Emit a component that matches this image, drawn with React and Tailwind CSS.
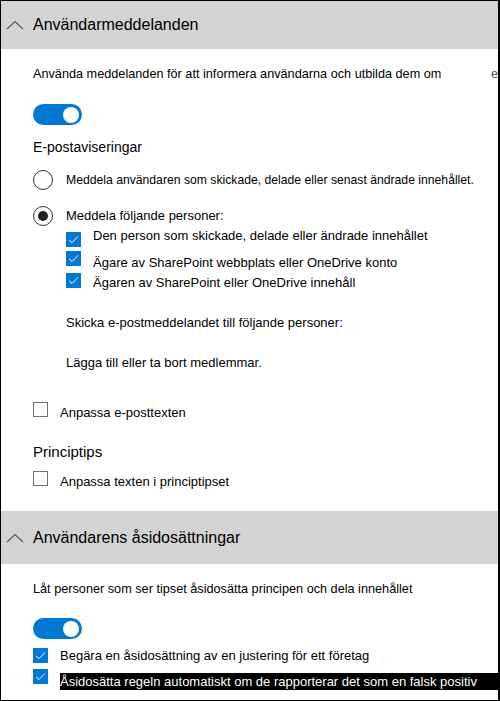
import React from "react";

const Chevron = () => (
  <svg width="18" height="10" viewBox="0 0 18 10" className="shrink-0">
    <polyline points="1,9 9,1.5 17,9" fill="none" stroke="#555" strokeWidth="1.1" />
  </svg>
);

const Toggle = () => (
  <div className="w-[49px] h-[21px] rounded-full bg-[#0078d4] flex items-center justify-end pr-[3px]">
    <div className="w-[16px] h-[16px] rounded-full bg-white" />
  </div>
);

const CheckBox = ({ checked, className = "" }) =>
  checked ? (
    <div className={`w-[15px] h-[15px] bg-[#0078d4] flex items-center justify-center shrink-0 ${className}`}>
      <svg width="11" height="9" viewBox="0 0 11 9">
        <polyline points="1,4.8 4,7.6 10,1.4" fill="none" stroke="white" strokeWidth="1" />
      </svg>
    </div>
  ) : (
    <div className={`w-[15px] h-[15px] border border-[#707070] bg-white shrink-0 ${className}`} />
  );

const Radio = ({ selected }) => (
  <div className="w-[20px] h-[20px] rounded-full border-[1.5px] border-[#333] flex items-center justify-center shrink-0">
    {selected && <div className="w-[10px] h-[10px] rounded-full bg-[#222]" />}
  </div>
);

const Header = ({ title, h }) => (
  <div className={`${h} bg-[#d3d3d3] flex items-center pl-[5px] gap-[9px]`}>
    <Chevron />
    <span className="text-[16px] text-black">{title}</span>
  </div>
);

export default function App() {
  return (
    <div
      className="w-[500px] h-[701px] border border-r-2 border-black bg-white overflow-hidden text-black"
      style={{ fontFamily: '"Liberation Sans", Arial, sans-serif' }}
    >
      <Header title="Användarmeddelanden" h="h-[48px]" />

      <div className="pl-[32px] text-[13px] leading-[20px] whitespace-nowrap">
        <div className="mt-[15px] relative text-[12.7px]">
          Använda meddelanden för att informera användarna och utbilda dem om
          <span className="absolute left-[458px] text-[#555]">e</span>
        </div>

        <div className="mt-[20px]">
          <Toggle />
        </div>

        <div className="mt-[12px] text-[14px]">E-postaviseringar</div>

        <div className="mt-[13px] flex items-center gap-[13px] h-[20px]">
          <Radio />
          <span className="text-[12.2px]">
            Meddela användaren som skickade, delade eller senast ändrade innehållet.
          </span>
        </div>

        <div className="mt-[16px] flex items-center gap-[13px] h-[20px]">
          <Radio selected />
          <span>Meddela följande personer:</span>
        </div>

        <div className="pl-[33px] flex flex-col">
          <div className="flex items-start gap-[12px]">
            <CheckBox checked className="mt-[6px]" />
            <span>Den person som skickade, delade eller ändrade innehållet</span>
          </div>
          <div className="mt-[4px] flex items-start gap-[12px]">
            <CheckBox checked />
            <span className="mt-[2px]">Ägare av SharePoint webbplats eller OneDrive konto</span>
          </div>
          <div className="flex items-start gap-[12px]">
            <CheckBox checked />
            <span>Ägaren av SharePoint eller OneDrive innehåll</span>
          </div>

          <div className="mt-[20px]">Skicka e-postmeddelandet till följande personer:</div>
          <div className="mt-[20px]">Lägga till eller ta bort medlemmar.</div>
        </div>

        <div className="mt-[29px] flex items-start gap-[12px]">
          <CheckBox />
          <span className="mt-[1px]">Anpassa e-posttexten</span>
        </div>

        <div className="mt-[19px] text-[15px]">Principtips</div>

        <div className="mt-[9px] flex items-start gap-[12px]">
          <CheckBox />
          <span className="mt-[1px]">Anpassa texten i principtipset</span>
        </div>
      </div>

      <div className="mt-[19px]">
        <Header title="Användarens åsidosättningar" h="h-[53px]" />
      </div>

      <div className="pl-[32px] text-[13px] leading-[20px] whitespace-nowrap">
        <div className="mt-[15px] text-[12.7px]">
          Låt personer som ser tipset åsidosätta principen och dela innehållet
        </div>

        <div className="mt-[19px]">
          <Toggle />
        </div>

        <div className="mt-[7px] flex items-start gap-[12px]">
          <CheckBox checked className="mt-[2px]" />
          <span>Begära en åsidosättning av en justering för ett företag</span>
        </div>

        <div className="mt-[3px] flex items-start gap-[12px]">
          <CheckBox checked />
          <span className="mt-[4px] bg-black text-white w-[440px] leading-[17px]">
            Åsidosätta regeln automatiskt om de rapporterar det som en falsk positiv
          </span>
        </div>
      </div>
    </div>
  );
}
